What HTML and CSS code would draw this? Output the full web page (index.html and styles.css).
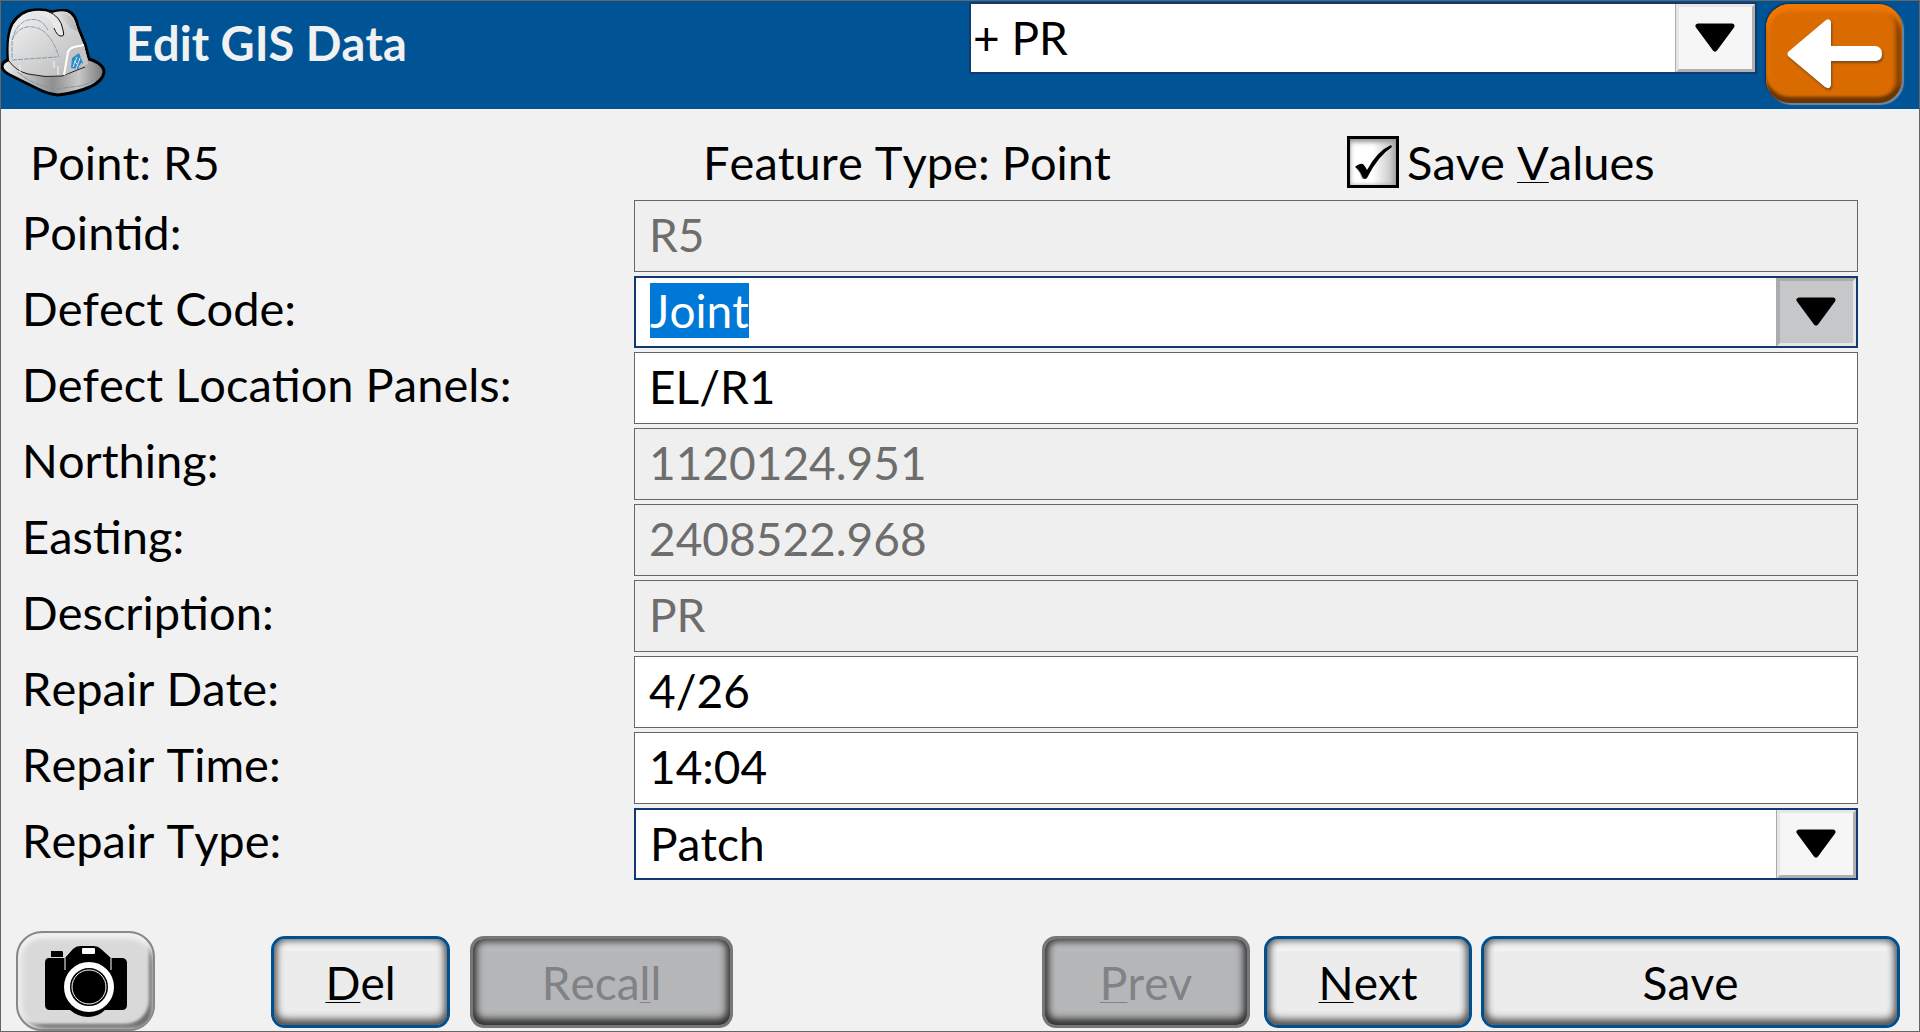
FILE: index.html
```html
<!DOCTYPE html>
<html lang="en">
<head>
<meta charset="utf-8">
<meta name="viewport" content="width=device-width, initial-scale=1">
<title>Edit GIS Data</title>
<link rel="stylesheet" href="styles.css">
</head>
<body>
<form class="app">
  <header class="header">
    <svg class="helmet" viewBox="0 0 107 108" aria-hidden="true">
      <defs>
        <linearGradient id="dome" x1="0" y1="0" x2="1" y2="1">
          <stop offset="0" stop-color="#f4f4f4"/><stop offset=".55" stop-color="#d2d2d2"/><stop offset="1" stop-color="#b4b4b4"/>
        </linearGradient>
        <linearGradient id="brim" x1="0" y1="0" x2="1" y2="0">
          <stop offset="0" stop-color="#f0f0f0"/><stop offset=".5" stop-color="#8f8f8f"/><stop offset=".75" stop-color="#c8c8c8"/><stop offset="1" stop-color="#777"/>
        </linearGradient>
        <linearGradient id="ridge" x1="0" y1="0" x2="1" y2="0">
          <stop offset="0" stop-color="#fff"/><stop offset="1" stop-color="#b0b0b0"/>
        </linearGradient>
      </defs>
      <path d="M7 59Q1 61 1 66Q2 71 11 75L37 88Q47 93 57 94Q75 92 89 86Q102 80 103 71Q103 66 97 62Q92 59 88 58L84 43L77 26Q74 11 65 9.500Q56 9 51 11Q43 8 33 9Q19 10 11 23Q6 33 7 59Z" fill="url(#brim)" stroke="#000" stroke-width="3"/>
      <path d="M8 59Q6 34 13 23Q21 11 33 10Q43 9 51 12Q59 9 66 11Q73 14 76 27L83 45L87 59Q82 67 62 75Q39 76 23 71Q12 66 8 59Z" fill="url(#dome)"/>
      <path d="M42 11Q55 13 59 34Q63 36 61 25Q59 15 51 12Q62 11 66 12Q74 17 77 31L69 27Q61 14 51 12" fill="url(#ridge)"/>
      <path d="M44 11Q56 14 61 27Q63 34 60 35Q56 35 53 27Q49 14 32 12" fill="#e9e9e9"/>
      <path d="M46 10Q60 15 62 29Q64 36 60 35Q56 35 53 27" fill="none" stroke="#111" stroke-width="1"/>
      <path d="M11 57V41Q14 23 27 19Q40 16 47 29M11 39Q18 24 32 26Q49 28 58 56M11 59L56 56" fill="none" stroke="#7f9bb0" stroke-width="1" stroke-dasharray="5 1"/>
      <path d="M8 60Q15 70 27 73Q44 77 61 75L84 66" fill="none" stroke="#222" stroke-width="1"/>
      <path d="M19 64V72M53 60V67M57 65V74" stroke="#f6f6f6" stroke-width="1"/>
      <path d="M63 74L67 51Q69 47 73 46L83 44L87 63Z" fill="#c4c4c4"/>
      <path d="M63 74L67 51Q69 47 73 46L83 44" fill="none" stroke="#fff" stroke-width="2"/>
      <path d="M70 67L71 57L78 52L82 62L77 68Z" fill="#2b8cc8"/>
      <path d="M72 66L76 56M75 68L79 57M73 60L77 64M78 66L81 62" stroke="#d5e7f2" stroke-width="1"/>
      <path d="M17 71Q29 83 54 88L79 85Q95 81 100 72" fill="none" stroke="#7995a8" stroke-width="1" stroke-dasharray="6 1"/>
    </svg>
    <h1 class="title">Edit GIS Data</h1>
    <div class="combo header-combo">
      <select class="field" aria-label="Feature code"><option>+ PR</option></select>
      <span class="drop"><svg viewBox="0 0 42 30"><path d="M4 3H38L21 26Z"/></svg></span>
    </div>
    <button class="back" type="button" aria-label="Back">
      <svg viewBox="0 0 96 74" aria-hidden="true"><path d="M2 35L40 3Q44 1 45 5V29H90Q96 30 96 37Q96 43 90 44H45V68Q44 73 39 70L2 39Q1 37 2 35Z"/></svg>
    </button>
  </header>

  <div class="info">
    <span>Point: R5</span>
    <span>Feature Type: Point</span>
    <label class="check">
      <span class="tick"><input type="checkbox" checked><svg viewBox="0 0 52 52" aria-hidden="true"><path d="M9 32Q13 36 15 43L19 41L16 31Z" fill="#999"/><path d="M8 31Q13 27 16 28Q18 30 20 34Q30 15 44 9L45 11Q31 20 20 42Q18 44 16 42Q13 34 8 31Z"/></svg></span>
      <span>Save <u>V</u>alues</span>
    </label>
  </div>

  <main class="fields">
    <label for="pointid">Pointid:</label>
    <input class="field" id="pointid" value="R5" disabled>
    <label for="code">Defect Code:</label>
    <div class="combo">
      <input class="field" id="code" value="Joint" role="combobox" aria-expanded="false">
      <button class="drop pressed" type="button" aria-label="Show codes"><svg viewBox="0 0 42 30"><path d="M4 3H38L21 26Z"/></svg></button>
    </div>
    <label for="panels">Defect Location Panels:</label>
    <input class="field" id="panels" value="EL/R1">
    <label for="northing">Northing:</label>
    <input class="field" id="northing" value="1120124.951" disabled>
    <label for="easting">Easting:</label>
    <input class="field" id="easting" value="2408522.968" disabled>
    <label for="description">Description:</label>
    <input class="field" id="description" value="PR" disabled>
    <label for="date">Repair Date:</label>
    <input class="field" id="date" value="4/26">
    <label for="time">Repair Time:</label>
    <input class="field" id="time" value="14:04">
    <label for="type">Repair Type:</label>
    <div class="combo">
      <select class="field" id="type"><option>Patch</option></select>
      <span class="drop"><svg viewBox="0 0 42 30"><path d="M4 3H38L21 26Z"/></svg></span>
    </div>
  </main>

  <footer class="footer">
    <button class="camera" type="button" aria-label="Take photo">
      <svg viewBox="0 0 84 72" aria-hidden="true">
        <path d="M7 6H18Q19 6 19 8V12H7V8ZM5 13H21L29 4Q32 1 36 1H50Q54 1 57 4L67 13H79Q83 14 83 18V60Q83 65 78 65H61Q54 72 44 72T26 65H6Q1 65 1 60V18Q1 13 5 13Z"/>
        <path d="M21 13V25M67 13V25" stroke="#fff" stroke-width="1"/>
        <rect x="38" y="3" width="13" height="6" rx="1" fill="#fff"/>
        <circle cx="45" cy="42" r="22" fill="none" stroke="#fff" stroke-width="6"/>
        <circle cx="45" cy="42" r="17" fill="none" stroke="#fff" stroke-width="1"/>
      </svg>
    </button>
    <button class="btn del" type="button"><u>D</u>el</button>
    <button class="btn recall" type="button" disabled>Reca<u>l</u>l</button>
    <button class="btn prev" type="button" disabled><u>P</u>rev</button>
    <button class="btn next" type="button"><u>N</u>ext</button>
    <button class="btn save" type="button">Save</button>
  </footer>
</form>
<script src="script.js"></script>
</body>
</html>
```
FILE: styles.css
```css
* { box-sizing: border-box; }

body {
  margin: 0;
  background: #f1f1f1;
  color: #000;
  font: 46px/64px Lato, "Open Sans", sans-serif;
  font-kerning: none;
}

input, select, button { font: inherit; font-kerning: none; color: inherit; margin: 0; }

u {
  text-decoration-thickness: 1px;
  text-underline-offset: 2px;
  text-decoration-skip-ink: none;
}

.app {
  display: flex;
  flex-direction: column;
  min-height: 100vh;
  border: 1px solid #666;
}

/* Header */
.header {
  display: flex;
  align-items: flex-start;
  height: 108px;
  padding-right: 17px;
  background: #005496;
}
.helmet { flex: none; width: 107px; height: 108px; }
.title {
  flex: 1;
  margin: 10px 0 0 18px;
  color: #f1f1f1;
  font-size: 47px;
  font-weight: 700;
  white-space: nowrap;
}
.header-combo { flex: 0 0 788px; margin: 1px 9px 0 0; }
.header-combo .field { padding-left: 2px; padding-bottom: 0; }
.back {
  display: flex;
  align-items: center;
  justify-content: center;
  flex: none;
  width: 136px;
  height: 99px;
  margin-top: 3px;
  padding: 0;
  border: 0;
  border-radius: 24px;
  background: #d96b00;
  box-shadow: inset 0 7px 4px #f07800, inset 0 -6px 3px #6b3500, inset -6px 0 4px #7d3e00, inset 4px 0 4px #e87200, -1px -1px 2px #002e55, 2px 2px 1px #6f8ba3;
}
.back svg {
  width: 96px;
  height: 74px;
  fill: #fff;
  filter: drop-shadow(1px 2px 1px #7a4a1c);
}

/* Point summary */
.info {
  display: grid;
  grid-template-columns: 673fr 644fr 572fr;
  align-items: center;
  height: 91px;
  padding: 15px 0 0 29px;
  font-size: 47px;
}
.check { display: flex; align-items: center; gap: 8px; }
.tick { display: grid; width: 52px; height: 52px; }
.tick > * { grid-area: 1 / 1; width: 52px; height: 52px; }
.tick input {
  appearance: none;
  border: 3px solid #000;
  background: linear-gradient(to left, #bbb, #fff 50%);
  box-shadow: inset 0 3px 5px #999, inset -2px 0 4px #aaa;
}
.tick svg { z-index: 1; pointer-events: none; }
.tick input:not(:checked) + svg { display: none; }

/* Attribute fields */
.fields {
  display: grid;
  grid-template-columns: 1fr 2fr;
  row-gap: 4px;
  padding: 0 61px 0 21px;
}
.fields > label { font-size: 47px; }
.field {
  width: 100%;
  height: 72px;
  padding: 0 14px 3px;
  border: 1px solid #666;
  border-radius: 0;
  background: #fff;
  outline: 0;
  appearance: none;
}
select.field { padding-bottom: 0; }
.field:disabled { background: #efefef; color: #6d6d6d; }
.field::selection { background: #0078d7; color: #fff; }

.combo { display: grid; grid-template-columns: 1fr 82px; }
.combo .field { grid-area: 1 / 1 / 2 / 3; border: 2px solid #103a70; }
.drop {
  grid-area: 1 / 2;
  display: flex;
  align-items: center;
  justify-content: center;
  z-index: 1;
  height: 68px;
  margin: 2px 2px 2px 1px;
  padding: 0 1px 0 0;
  border: 3px solid;
  border-color: #e6e6e6 #b0b0b0 #b0b0b0 #e6e6e6;
  background: #f6f6f6;
  box-shadow: -1px 0 #aaa;
  pointer-events: none;
}
.drop svg {
  width: 42px;
  height: 30px;
  fill: #000;
  stroke: #000;
  stroke-width: 5px;
  stroke-linejoin: round;
}
.pressed {
  border-color: #acacac #e6e6e6 #e6e6e6 #acacac;
  background: #c6c7c9;
  pointer-events: auto;
}

/* Actions */
.footer {
  display: flex;
  align-items: flex-end;
  height: 101px;
  margin-top: auto;
  padding: 0 19px 0 15px;
}
.btn {
  flex: none;
  height: 92px;
  margin-bottom: 3px;
  padding: 2px 0 0;
  border: 3px solid #00508f;
  border-radius: 14px;
  background: linear-gradient(#f5f5f5 10px, #ececec 13px);
  box-shadow: inset 0 -5px 8px #555, inset 0 0 8px 1px #555;
}
.btn:disabled {
  border-color: #757779;
  background: linear-gradient(#bcbdbf 10px, #b5b6b8 13px);
  color: #808285;
  box-shadow: inset 0 -5px 8px #333, inset 0 0 8px 2px #333;
}
.camera {
  flex: none;
  display: flex;
  align-items: center;
  justify-content: center;
  width: 139px;
  height: 100px;
  padding: 0;
  border: 2px solid #888;
  border-radius: 26px;
  background: #d9d9d9;
  box-shadow: inset 0 6px 5px #f0f0f0, inset 5px 0 5px #e8e8e8, inset -4px -5px 3px #707070;
}
.camera svg { width: 84px; height: 72px; }
.del { width: 179px; margin-left: 116px; }
.recall { width: 263px; margin-left: 20px; }
.prev { width: 208px; margin-left: auto; }
.next { width: 208px; margin-left: 14px; }
.save { width: 419px; margin-left: 9px; }
```
FILE: script.js
```js
const code = document.getElementById('code');
code.focus();
code.select();
```
